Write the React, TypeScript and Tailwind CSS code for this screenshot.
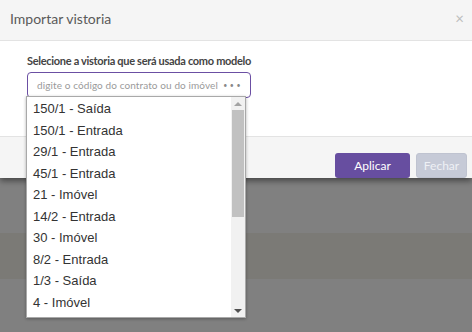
import React from 'react';

const items = [
  '150/1 - Saída',
  '150/1 - Entrada',
  '29/1 - Entrada',
  '45/1 - Entrada',
  '21 - Imóvel',
  '14/2 - Entrada',
  '30 - Imóvel',
  '8/2 - Entrada',
  '1/3 - Saída',
  '4 - Imóvel',
];

export default function App() {
  return (
    <div className="relative w-[472px] h-[332px] overflow-hidden bg-[#808080]" style={{ fontFamily: 'Lato, "Open Sans", sans-serif' }}>
      {/* modal */}
      <div className="bg-white shadow-[0_3px_6px_rgba(0,0,0,0.45)]">
        <div className="h-[41px] bg-[#f5f5f5] border-b border-[#e3e3e3] flex items-center justify-between pl-[10px] pr-[8px]">
          <h4 className="text-[14px] text-[#5a5a5a] leading-none -mt-[2px]">Importar vistoria</h4>
          <span className="text-[15px] text-[#bdbdbd] leading-none -mt-[3px]">×</span>
        </div>
        <div className="h-[95px] pl-[27px] pt-[13px]">
          <label className="block text-[11px] font-bold text-[#444] leading-[14px] tracking-[-0.3px] whitespace-nowrap">
            Selecione a vistoria que será usada como modelo
          </label>
          <div className="mt-[4px] w-[224px] h-[26px] border border-[#6b4fa3] rounded-[4px] flex items-center pl-[9px] pr-[9px]">
            <span className="flex-1 text-[10px] tracking-[0.1px] text-[#9a9a9a] whitespace-nowrap">digite o código do contrato ou do imóvel</span>
            <span className="text-[7px] text-[#888] tracking-[2.5px] -mr-[2px]">•••</span>
          </div>
        </div>
        <div className="h-[42px] bg-[#f5f5f5] border-t border-[#e3e3e3] flex items-start justify-end gap-[6px] pr-[5px] pt-[16px]">
          <button className="w-[75px] h-[25px] rounded-[3px] bg-[#674ea0] text-white text-[12px]">Aplicar</button>
          <button className="w-[51px] h-[25px] rounded-[3px] bg-[#c6cad7] border border-[#bfc3d0] text-[#eef0f5] text-[12px]">Fechar</button>
        </div>
      </div>
      <div className="mt-[55px] h-[46px] bg-[#7b7a76]" />

      {/* dropdown list */}
      <div
        className="absolute left-[26px] top-[96px] w-[220px] h-[222px] bg-white border border-[#a9a9a9] shadow-[0_1px_3px_rgba(0,0,0,0.3)] flex"
        style={{ fontFamily: '"Liberation Sans", Arial, sans-serif' }}
      >
        <ul className="flex-1 pt-[1px]">
          {items.map((it) => (
            <li key={it} className="h-[21.5px] leading-[21.5px] pl-[6px] text-[13px] text-[#333]">
              {it}
            </li>
          ))}
        </ul>
        <div className="w-[14px] bg-[#f1f1f1] flex flex-col items-center">
          <div className="h-[13px] flex items-center justify-center">
            <div className="w-0 h-0 border-l-[4px] border-r-[4px] border-b-[4px] border-l-transparent border-r-transparent border-b-[#a3a3a3]" />
          </div>
          <div className="w-[12px] h-[107px] bg-[#c1c1c1]" />
          <div className="flex-1" />
          <div className="h-[13px] flex items-center justify-center">
            <div className="w-0 h-0 border-l-[4px] border-r-[4px] border-t-[4px] border-l-transparent border-r-transparent border-t-[#505050]" />
          </div>
        </div>
      </div>
    </div>
  );
}
